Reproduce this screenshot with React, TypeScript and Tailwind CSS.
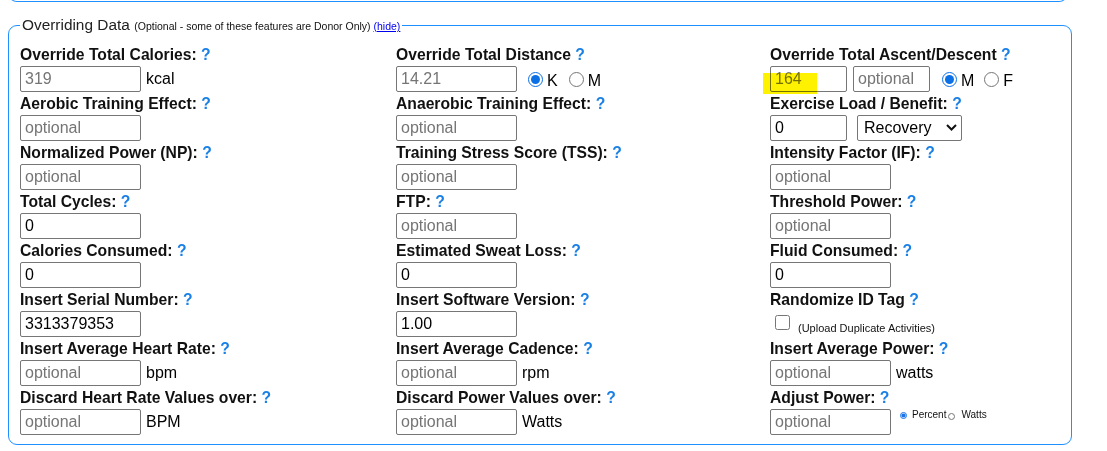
import React from 'react';

const Q = () => <span className="text-[#1a80e5]">?</span>;

function Label({ text }: { text: string }) {
  return (
    <div className="h-[19px] leading-[19px] text-[15.7px] font-bold whitespace-nowrap text-[#111]">
      {text} <Q />
    </div>
  );
}

function Field({
  value,
  gray,
  w = 'w-[121px]',
}: {
  value?: string;
  gray?: boolean;
  w?: string;
}) {
  return (
    <input
      type="text"
      defaultValue={value}
      placeholder="optional"
      className={`${w} h-[26px] border border-[#767676] rounded-[2px] bg-white px-[4px] text-[16px] leading-[24px] outline-none placeholder:text-[#757575] ${
        gray ? 'text-[#757575]' : 'text-black'
      }`}
    />
  );
}

function Unit({ children }: { children: React.ReactNode }) {
  return <span className="ml-[5px] text-[16px] text-black">{children}</span>;
}

function Radio({ name, checked, label }: { name: string; checked?: boolean; label: string }) {
  return (
    <label className="flex items-center text-[16px] text-black">
      <input
        type="radio"
        name={name}
        defaultChecked={checked}
        className="m-0 w-[15px] h-[15px] accent-[#0b6fe6]"
      />
      <span className="ml-[4px] mt-[4px]">{label}</span>
    </label>
  );
}

function Cell({ label, children }: { label: string; children: React.ReactNode }) {
  return (
    <div className="flex flex-col gap-[2px]">
      <Label text={label} />
      <div className="flex h-[26px] items-center">{children}</div>
    </div>
  );
}

export default function App() {
  return (
    <div className="min-h-screen bg-white px-2 font-['Liberation_Sans',Arial,sans-serif] text-black">
      <div className="-mt-[10px] h-[12px] w-[1060px] rounded-b-[9px] border-x border-b border-[#1e90ff]" />

      <fieldset className="mt-[14px] w-[1064px] rounded-[9px] border border-[#1e90ff] px-[11px] pb-[9px] pt-[11px]">
        <legend className="ml-0 h-[18px] px-[2px] leading-[18px] whitespace-nowrap">
          <span className="text-[15.4px] text-[#222]">Overriding Data</span>{' '}
          <span className="text-[10.5px] text-[#111]">
            (Optional - some of these features are Donor Only){' '}
            <a href="#" className="text-[#0000ee] underline">
              (hide)
            </a>
          </span>
        </legend>

        <div className="grid grid-cols-[376px_374px_1fr] gap-y-[2px]">
          {/* row 1 */}
          <Cell label="Override Total Calories:">
            <Field value="319" gray />
            <Unit>kcal</Unit>
          </Cell>
          <Cell label="Override Total Distance">
            <Field value="14.21" gray />
            <div className="ml-[11px] flex gap-[11px]">
              <Radio name="dist" checked label="K" />
              <Radio name="dist" label="M" />
            </div>
          </Cell>
          <Cell label="Override Total Ascent/Descent">
            <div className="relative">
              <Field value="164" gray w="w-[77px]" />
              <span className="pointer-events-none absolute left-[-7px] top-[7px] h-[21px] w-[54px] bg-[#fff200] mix-blend-multiply" />
            </div>
            <div className="ml-[6px]">
              <Field w="w-[77px]" />
            </div>
            <div className="ml-[12px] flex gap-[10px]">
              <Radio name="asc" checked label="M" />
              <Radio name="asc" label="F" />
            </div>
          </Cell>

          {/* row 2 */}
          <Cell label="Aerobic Training Effect:">
            <Field />
          </Cell>
          <Cell label="Anaerobic Training Effect:">
            <Field />
          </Cell>
          <Cell label="Exercise Load / Benefit:">
            <Field value="0" w="w-[77px]" />
            <div className="relative ml-[10px]">
              <select className="h-[26px] w-[105px] appearance-none rounded-[2px] border border-[#767676] bg-white pl-[6px] text-[16px] text-black outline-none">
                <option>Recovery</option>
              </select>
              <svg
                className="pointer-events-none absolute right-[5px] top-[9px]"
                width="11"
                height="7"
                viewBox="0 0 11 7"
              >
                <path d="M1 1 L5.5 5.5 L10 1" fill="none" stroke="#111" strokeWidth="2" />
              </svg>
            </div>
          </Cell>

          {/* row 3 */}
          <Cell label="Normalized Power (NP):">
            <Field />
          </Cell>
          <Cell label="Training Stress Score (TSS):">
            <Field />
          </Cell>
          <Cell label="Intensity Factor (IF):">
            <Field />
          </Cell>

          {/* row 4 */}
          <Cell label="Total Cycles:">
            <Field value="0" />
          </Cell>
          <Cell label="FTP:">
            <Field />
          </Cell>
          <Cell label="Threshold Power:">
            <Field />
          </Cell>

          {/* row 5 */}
          <Cell label="Calories Consumed:">
            <Field value="0" />
          </Cell>
          <Cell label="Estimated Sweat Loss:">
            <Field value="0" />
          </Cell>
          <Cell label="Fluid Consumed:">
            <Field value="0" />
          </Cell>

          {/* row 6 */}
          <Cell label="Insert Serial Number:">
            <Field value="3313379353" />
          </Cell>
          <Cell label="Insert Software Version:">
            <Field value="1.00" />
          </Cell>
          <div className="flex flex-col gap-[2px]">
            <div className="h-[19px] whitespace-nowrap text-[15.7px] font-bold leading-[19px] text-[#111]">
              Randomize ID Tag <Q />
            </div>
            <label className="flex h-[26px] items-start pl-[5px] pt-[4px]">
              <input type="checkbox" className="m-0 h-[15px] w-[15px]" />
              <span className="ml-[8px] mt-[5px] text-[11px] text-[#111]">(Upload Duplicate Activities)</span>
            </label>
          </div>

          {/* row 7 */}
          <Cell label="Insert Average Heart Rate:">
            <Field />
            <Unit>bpm</Unit>
          </Cell>
          <Cell label="Insert Average Cadence:">
            <Field />
            <Unit>rpm</Unit>
          </Cell>
          <Cell label="Insert Average Power:">
            <Field />
            <Unit>watts</Unit>
          </Cell>

          {/* row 8 */}
          <Cell label="Discard Heart Rate Values over:">
            <Field />
            <Unit>BPM</Unit>
          </Cell>
          <Cell label="Discard Power Values over:">
            <Field />
            <Unit>Watts</Unit>
          </Cell>
          <div className="flex flex-col gap-[2px]">
            <Label text="Adjust Power:" />
            <div className="flex h-[26px] items-start">
              <Field />
              <div className="ml-[9px] -mt-[2px] flex items-start text-[10px] text-[#111]">
                <input
                  type="radio"
                  name="adj"
                  defaultChecked
                  className="m-0 mt-[5px] h-[7px] w-[7px] accent-[#1a73e8]"
                />
                <span className="ml-[5px]">Percent</span>
                <input type="radio" name="adj" className="m-0 ml-[2px] mt-[6px] h-[7px] w-[7px]" />
                <span className="ml-[6px]">Watts</span>
              </div>
            </div>
          </div>
        </div>
      </fieldset>
    </div>
  );
}
